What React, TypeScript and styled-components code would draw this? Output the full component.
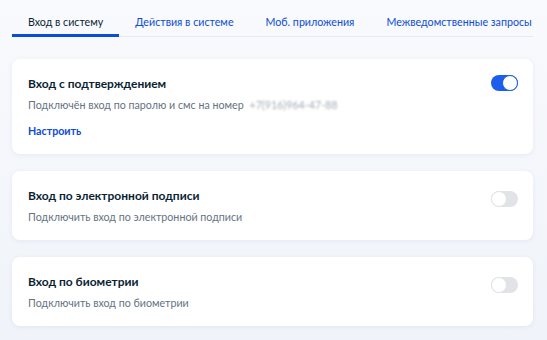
import React from 'react'
import styled, { createGlobalStyle } from 'styled-components'

const GlobalStyle = createGlobalStyle`
  body {
    margin: 0;
    background: linear-gradient(180deg, #f8fafd 0%, #f0f3f9 100%);
    font-family: Lato, 'Noto Sans', sans-serif;
  }
`

const Page = styled.div`
  width: 547px;
  height: 340px;
  padding: 0 14px 0 12px;
  box-sizing: border-box;
  overflow: hidden;
`

const Tabs = styled.div`
  display: flex;
  border-bottom: 1px solid #e4e9f2;
  margin-bottom: 22px;
`

const Tab = styled.div<{ $active?: boolean }>`
  flex-shrink: 0;
  padding: 14px 16px 4px;
  font-size: 10.7px;
  line-height: 16px;
  white-space: nowrap;
  color: ${({ $active }) => ($active ? '#0b1f33' : '#0d4cd3')};
  border-bottom: 3px solid ${({ $active }) => ($active ? '#0d4cd3' : 'transparent')};
  margin-bottom: -1px;
`

const List = styled.div`
  display: flex;
  flex-direction: column;
  gap: 17px;
`

const Card = styled.div`
  display: flex;
  align-items: flex-start;
  justify-content: space-between;
  background: #fff;
  border-radius: 8px;
  padding: 16px 15px 15px 16px;
  box-shadow: 0 1px 5px rgba(30, 60, 140, 0.07);
`

const Body = styled.div`
  display: flex;
  flex-direction: column;
`

const Title = styled.div`
  font-size: 12px;
  font-weight: 700;
  line-height: 18px;
  color: #0b1f33;
`

const Subtitle = styled.div`
  margin-top: 4px;
  font-size: 10.7px;
  line-height: 16px;
  color: #66727f;
`

const Masked = styled.span`
  margin-left: 3px;
  color: #a4acb5;
  filter: blur(1.1px);
`

const Link = styled.div`
  margin-top: 10px;
  font-size: 10.7px;
  font-weight: 700;
  line-height: 16px;
  color: #0d4cd3;
`

const Toggle = styled.div<{ $on?: boolean; $offset: number }>`
  width: 27px;
  height: 16px;
  border-radius: 8px;
  margin-top: ${({ $offset }) => $offset}px;
  box-sizing: border-box;
  display: flex;
  justify-content: ${({ $on }) => ($on ? 'flex-end' : 'flex-start')};
  background: ${({ $on }) => ($on ? '#1d5deb' : '#e2e3e6')};
`

const Knob = styled.div<{ $on?: boolean }>`
  width: 16px;
  height: 16px;
  border-radius: 50%;
  box-sizing: border-box;
  background: #fff;
  border: 1px solid ${({ $on }) => ($on ? '#1d5deb' : '#e2e3e6')};
`

interface Setting {
  title: string
  text: React.ReactNode
  link?: string
  on: boolean
  offset: number
}

const settings: Setting[] = [
  {
    title: 'Вход с подтверждением',
    text: (
      <>
        Подключён вход по паролю и смс на номер <Masked>+7(916)964-47-88</Masked>
      </>
    ),
    link: 'Настроить',
    on: true,
    offset: 0,
  },
  {
    title: 'Вход по электронной подписи',
    text: 'Подключить вход по электронной подписи',
    on: false,
    offset: 4,
  },
  {
    title: 'Вход по биометрии',
    text: 'Подключить вход по биометрии',
    on: false,
    offset: 4,
  },
]

const tabs = ['Вход в систему', 'Действия в системе', 'Моб. приложения', 'Межведомственные запросы']

const App: React.FC = (): JSX.Element => (
  <Page>
    <GlobalStyle />
    <Tabs>
      {tabs.map((t, i) => (
        <Tab key={t} $active={i === 0}>
          {t}
        </Tab>
      ))}
    </Tabs>
    <List>
      {settings.map((s) => (
        <Card key={s.title}>
          <Body>
            <Title>{s.title}</Title>
            <Subtitle>{s.text}</Subtitle>
            {s.link && <Link>{s.link}</Link>}
          </Body>
          <Toggle $on={s.on} $offset={s.offset}>
            <Knob $on={s.on} />
          </Toggle>
        </Card>
      ))}
    </List>
  </Page>
)

export default App
